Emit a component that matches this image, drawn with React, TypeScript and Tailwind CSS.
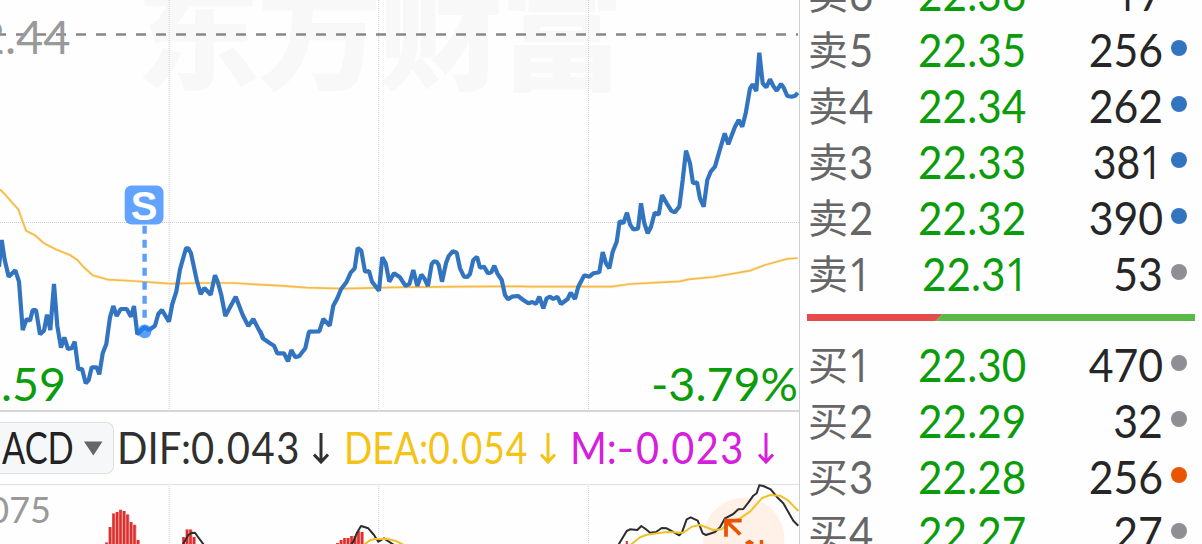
import React from "react";

type Point = [number, number];

const LATIN = "font-[Lato,'Noto_Sans_CJK_SC',sans-serif]";

/* Chart samples are kept in thirds of a pixel, relative to each segment's origin. */
function segment(ox: number, oy: number, raw: string): Point[] {
  return raw
    .trim()
    .split(/\s+/)
    .map((pair) => {
      const [x, y] = pair.split(",").map(Number);
      return [ox + x / 3, oy + y / 3] as Point;
    });
}

const toPoints = (pts: Point[]) => pts.map(([x, y]) => `${x.toFixed(1)},${y.toFixed(1)}`).join(" ");

const price = toPoints([
  ...segment(0, 180, `-3,260 5,180 14,240 26,290 46,271 57,305 68,450 80,417 90,422 98,390 108,390 120,463 132,452 141,404 151,450 162,312
    172,438 183,503 193,472 204,507 215,505 224,485 235,568 246,566 257,610 266,600 275,562 290,562 298,583 308,520 319,492
    330,412 340,378 350,408 362,387 380,387 393,410 402,378 412,463 433,442 447,450 465,437 475,402 486,390 507,425
    517,372 529,335 540,268 558,205 565,205 573,220 590,300 602,343 613,324 632,344 645,286 653,305 664,345 676,408 707,350 728,405
    745,438 760,417 772,440 790,475`),
  ...segment(260, 220, `0,332 8,355 30,370 42,377 52,400 72,400 84,424 94,390 106,412 118,408 136,385 147,335 178,334 190,297 209,317
    220,257 232,235 243,208 260,185 272,158 284,145 293,84 304,92 315,155 327,153 336,185 357,212 367,112 377,130 388,185 402,160
    420,172 436,197 448,193 460,150 472,198 484,164 493,175 504,198 515,132 522,124 530,126 536,135 546,185 558,130 566,108 578,94 590,98
    600,145 612,170 622,171 630,162 640,120 651,110 660,143 672,140 684,160 694,157 703,137 712,160 725,180 735,225 744,238 756,230 774,228
    790,240 805,250`),
  ...segment(530, 40, `0,788 7,786 18,792 28,770 40,805 50,775 60,770 70,777 82,770 93,792 113,777 122,758 135,777 145,740 163,706 178,710
    190,700 208,697 218,636 228,670 238,685 248,635 260,605 269,543 280,550 291,518 300,553 310,568 324,566 333,490 343,550
    353,580 363,560 374,518 386,524 396,465 410,490 424,512 434,517 448,500 458,420 468,332 480,370 489,430 501,427 510,475 521,500
    532,420 542,395 555,380 568,335 584,280 595,313 615,260 626,240 637,260 647,220 660,145 668,133 679,153 688,38 698,130
    709,142 720,118 730,138 740,152 753,132 762,145 772,168 785,170 796,167 803,158`),
]);

const average = toPoints([
  ...segment(0, 180, `0,28 12,40 40,72 55,88 78,152 105,166 132,190 170,209 210,225 232,240 250,260 278,286 325,299 400,303 510,311 600,309 700,309`),
  ...segment(260, 220, `0,194 60,197 140,203 250,206 400,202 600,200 780,199`),
  ...segment(530, 40, `0,740 245,740 300,732 450,724 475,718 550,711 660,692 705,675 770,657 803,654`),
]);

const difLines = [
  segment(0, 400, "545,440 565,405 574,399 585,398 592,408 612,435"),
  segment(0, 400, "1050,438 1060,425 1070,400 1083,378 1105,385 1122,405 1135,425 1152,415 1182,435"),
  segment(400, 400, `652,440 680,393 690,388 712,390 724,378 738,388 750,398 768,396 785,384 800,385 818,395 838,406 846,397 860,358 872,352
    893,362 908,400 918,405 945,396 960,382 975,355 1000,342 1015,328 1030,327 1045,308 1060,287 1070,280 1078,256 1090,258
    1112,268 1130,290 1150,310 1180,362 1195,377`),
].map(toPoints);

const deaLines = [
  segment(0, 400, "1090,436 1110,421 1125,417 1160,416 1185,422 1210,434"),
  segment(400, 400, `690,436 720,412 740,404 800,396 850,398 875,380 900,375 940,390 965,388 985,370 1020,355 1050,335 1085,295 1110,285
    1140,287 1165,302 1195,333`),
].map(toPoints);

const bars: Point[] = [
  [105, 542.5], [108.5, 527], [112, 513.5], [115.5, 512], [119, 509.8], [122.5, 511], [126, 514.5], [129.5, 522], [133, 524.8], [136.5, 540],
  [182, 537], [185.5, 529.5], [189, 529.5], [192.5, 537],
  [336, 543], [339.5, 540], [343, 538], [346.5, 538], [350, 536], [353.5, 536], [357, 531], [360.5, 532],
];

const GRID_X = [169.2, 378.7, 588.5];

function GridColumns({ height }: { height: number }) {
  return (
    <g stroke="#cfcfcf" strokeWidth="1" strokeDasharray="1 1">
      {GRID_X.map((x) => (
        <line key={x} x1={x} x2={x} y1="0" y2={height} />
      ))}
    </g>
  );
}

function PriceChart() {
  return (
    <svg className="block h-[410px] w-full shrink-0" viewBox="0 0 799 410">
      <text x="136" y="80" fontSize="124" fontWeight="900" fill="#f8f8f8" fontFamily="Noto Sans CJK SC, sans-serif" textLength="488">
        东方财富
      </text>
      <GridColumns height={410} />
      <line x1="0" x2="799" y1="222.5" y2="222.5" stroke="#cfcfcf" strokeDasharray="1 1" />
      <line x1="-4" x2="798" y1="34.5" y2="34.5" stroke="#868686" strokeWidth="2.4" strokeDasharray="10 10" />
      <g fontFamily="Lato, sans-serif" fontSize="47">
        <text x="70.5" y="53.5" textAnchor="end" fill="#999">2.44</text>
        <text x="1" y="400.5" textLength="65" lengthAdjust="spacingAndGlyphs" fill="#0a9c0a">.59</text>
        <text x="651" y="400.5" textLength="147" lengthAdjust="spacingAndGlyphs" fill="#0a9c0a">-3.79%</text>
      </g>
      <polyline points={average} fill="none" stroke="#fff0c4" strokeWidth="3" />
      <polyline points={average} fill="none" stroke="#f5b94f" strokeWidth="1.7" />
      <polyline points={price} fill="none" stroke="#3274c0" strokeWidth="4.2" strokeLinejoin="bevel" />
      <line x1="144.6" x2="144.6" y1="225.7" y2="318" stroke="#5c9ffb" strokeWidth="4.4" strokeDasharray="8 6" />
      <circle cx="144.7" cy="331.4" r="6.8" fill="#2080f8" fillOpacity="0.75" />
      <rect x="124.7" y="185.5" width="38.8" height="39" rx="7" fill="#62a3ff" />
      <text x="144" y="219.6" fontSize="40" fontWeight="700" textAnchor="middle" fill="#fff" fontFamily="Liberation Sans, sans-serif">
        S
      </text>
    </svg>
  );
}

function DownArrow() {
  return (
    <svg className="block h-8 w-4 shrink-0" viewBox="0 0 16 32" fill="none" stroke="currentColor" strokeWidth="3">
      <path d="M8 1v29M1 22.5l7 7.5 7-7.5" />
    </svg>
  );
}

function IndicatorBar() {
  return (
    <div className={`flex h-[74px] shrink-0 items-center overflow-hidden border-t-2 border-t-[#d6d6d6] text-[43.5px] leading-none whitespace-nowrap ${LATIN}`}>
      <div className="flex h-[52px] w-[114px] shrink-0 items-center rounded-r-lg border border-l-0 border-[#dcdee2] bg-[#f6f7f9] pl-[2px]">
        <span className="w-[82px] shrink-0 text-[#222]">
          <span className="inline-block origin-left scale-x-[0.79]">ACD</span>
        </span>
        <svg className="block h-[15px] w-[19px] shrink-0" viewBox="0 0 19 15">
          <path d="M0 0.5h18.5L9.3 14.5z" fill="#666" />
        </svg>
      </div>
      <div className="flex w-[230px] shrink-0 items-center pl-[3px] text-[#303030]">
        <span className="w-[196px] shrink-0">
          <span className="inline-block origin-left scale-x-[0.92]">
            DIF:<span className="tracking-[1.7px]">0.043</span>
          </span>
        </span>
        <DownArrow />
      </div>
      <div className="flex w-[226px] shrink-0 items-center text-[#f3c317]">
        <span className="w-[196px] shrink-0">
          <span className="inline-block origin-left scale-x-[0.855]">
            DEA:<span className="tracking-[1.2px]">0.054</span>
          </span>
        </span>
        <DownArrow />
      </div>
      <div className="flex shrink-0 items-center text-[#d420dc]">
        <span className="w-[188px] shrink-0">
          <span className="inline-block origin-left scale-x-[0.912]">
            M:<span className="inline-block w-[21px] origin-left scale-x-[1.2]">-</span><span className="tracking-[1.6px]">0.023</span>
          </span>
        </span>
        <DownArrow />
      </div>
    </div>
  );
}

function MacdChart() {
  return (
    <svg className="block h-[60px] w-full shrink-0" viewBox="0 484 799 60">
      <g transform="translate(0 484)">
        <GridColumns height={60} />
      </g>
      <line x1="0" x2="799" y1="484.5" y2="484.5" stroke="#e0e0e0" />
      <text x="51" y="523.3" fontSize="36" textAnchor="end" fill="#999" fontFamily="Lato, sans-serif">0.075</text>
      {bars.map(([x, y]) => (
        <g key={x}>
          <rect x={x} y={y} width="3.5" height={544 - y} fill="#ff9d9d" />
          <rect x={x + 0.3} y={y} width="2.4" height={544 - y} fill="#d93030" />
        </g>
      ))}
      <rect x="625.8" y="541" width="2" height="3" fill="#d93030" />
      <circle cx="743.7" cy="538.4" r="40.6" fill="#fff0e8" />
      {difLines.map((p) => (
        <polyline key={p} points={p} fill="none" stroke="#2d2d2d" strokeWidth="2" strokeLinejoin="round" />
      ))}
      {deaLines.map((p) => (
        <polyline key={p} points={p} fill="none" stroke="#efc22c" strokeWidth="2" strokeLinejoin="round" />
      ))}
      <path d="M741.7 520.7H726v16M727 521.7l13.3 12.8" fill="none" stroke="#ea5504" strokeWidth="3.8" />
      <path d="M746 544l3.5-2.5 3.5 2.5M761.5 540v4" fill="none" stroke="#ea5504" strokeWidth="3.4" />
    </svg>
  );
}

/* Lato's "1" has a foot; the quote panel wants the plain form. */
function Digits({ value }: { value: string }) {
  return (
    <>
      {value.split("").map((c, i) =>
        c === "1" ? (
          <span key={i} className="-ml-[1px] font-['Open_Sans',sans-serif] leading-none">1</span>
        ) : (
          <React.Fragment key={i}>{c}</React.Fragment>
        ),
      )}
    </>
  );
}

type Quote = { side: string; level: string; price: string; volume: string; dot: "blue" | "gray" | "orange" | "none" };

const DOTS = { blue: "bg-[#3274c0]", gray: "bg-[#8f8e94]", orange: "bg-[#ea5504]", none: "bg-transparent" };

const sells: Quote[] = [
  { side: "卖", level: "6", price: "22.36", volume: "17", dot: "none" },
  { side: "卖", level: "5", price: "22.35", volume: "256", dot: "blue" },
  { side: "卖", level: "4", price: "22.34", volume: "262", dot: "blue" },
  { side: "卖", level: "3", price: "22.33", volume: "381", dot: "blue" },
  { side: "卖", level: "2", price: "22.32", volume: "390", dot: "blue" },
  { side: "卖", level: "1", price: "22.31", volume: "53", dot: "gray" },
];

const buys: Quote[] = [
  { side: "买", level: "1", price: "22.30", volume: "470", dot: "gray" },
  { side: "买", level: "2", price: "22.29", volume: "32", dot: "gray" },
  { side: "买", level: "3", price: "22.28", volume: "256", dot: "orange" },
  { side: "买", level: "4", price: "22.27", volume: "27", dot: "gray" },
];

function QuoteRow({ side, level, price: amount, volume, dot }: Quote) {
  return (
    <div className={`flex h-14 shrink-0 items-center pl-2 text-[45.5px] leading-[56px] whitespace-nowrap ${LATIN}`}>
      <div className="flex w-[92px] shrink-0 items-center text-[#666]">
        <span className="mb-1 w-[41px] shrink-0 font-['Noto_Sans_CJK_SC',sans-serif] text-[40px] leading-[52px]">{side}</span>
        <span className="inline-block origin-left scale-x-[0.92]"><Digits value={level} /></span>
      </div>
      <div className={`flex w-[144px] shrink-0 justify-center text-[#0a9c0a] ${amount.endsWith("1") ? "pl-[7px]" : ""}`}>
        <span className="inline-block scale-x-[0.93]"><Digits value={amount} /></span>
      </div>
      <div className="flex w-[119px] shrink-0 justify-end text-[#262626]">
        <span className={`inline-block origin-right ${volume.endsWith("1") ? "scale-x-[0.9]" : "scale-x-[0.94]"}`}><Digits value={volume} /></span>
      </div>
      <span className={`mb-[5px] ml-2 size-4 shrink-0 rounded-full ${DOTS[dot]}`} />
    </div>
  );
}

function OrderBook() {
  return (
    <aside className="flex h-full min-w-0 flex-1 flex-col overflow-hidden">
      <div className="-mt-[34px] flex shrink-0 flex-col">
        {sells.map((q) => (
          <QuoteRow key={q.level} {...q} />
        ))}
      </div>
      <svg className="mt-3 ml-[7px] block h-[7px] w-[388px] shrink-0" viewBox="0 0 388 7">
        <path d="M0 0h135.5l-7 7H0z" fill="#e64a4a" />
        <path d="M135.5 0H388v7H128.5z" fill="#5bb947" />
      </svg>
      <div className="mt-4 flex shrink-0 flex-col">
        {buys.map((q) => (
          <QuoteRow key={q.level} {...q} />
        ))}
      </div>
    </aside>
  );
}

export default function App() {
  return (
    <main className="flex h-[544px] w-[1202px] overflow-hidden bg-[#fefefe]">
      <section className="flex h-full w-[800px] shrink-0 flex-col overflow-hidden border-r border-[#cfcfcf]">
        <PriceChart />
        <IndicatorBar />
        <MacdChart />
      </section>
      <OrderBook />
    </main>
  );
}
